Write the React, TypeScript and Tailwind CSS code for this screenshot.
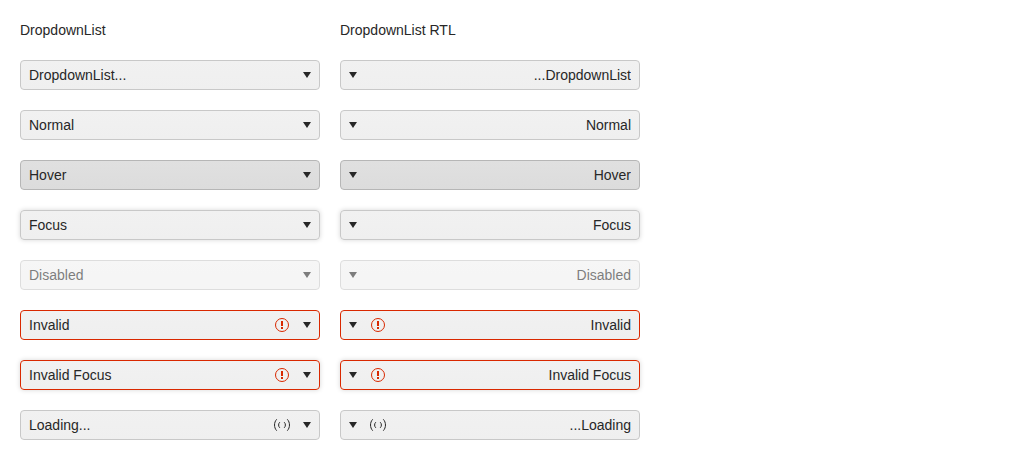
import clsx from "clsx";

type Status = "normal" | "hover" | "focus" | "disabled" | "invalid" | "invalidFocus" | "loading";

type Row = { id: string; text: string; status: Status };

const rows: Row[] = [
  { id: "default", text: "DropdownList...", status: "normal" },
  { id: "normal", text: "Normal", status: "normal" },
  { id: "hover", text: "Hover", status: "hover" },
  { id: "focus", text: "Focus", status: "focus" },
  { id: "disabled", text: "Disabled", status: "disabled" },
  { id: "invalid", text: "Invalid", status: "invalid" },
  { id: "invalid-focus", text: "Invalid Focus", status: "invalidFocus" },
  { id: "loading", text: "Loading...", status: "loading" },
];

const surface = "bg-linear-to-b from-[#f1f1f1] to-[#efefef]";
const rest = clsx(surface, "border-[#c8c8c8]");
const error = clsx(surface, "border-[#d92800]");
const focusRing = "shadow-[0_0_5px_0_rgba(0,0,0,0.16)]";

const looks: Record<Status, string> = {
  normal: rest,
  loading: rest,
  hover: "border-[#b6b6b6] bg-linear-to-b from-[#e0e0e0] to-[#dcdcdc]",
  focus: clsx(rest, focusRing),
  disabled: rest,
  invalid: error,
  invalidFocus: clsx(error, focusRing),
};

function CaretIcon() {
  return (
    <svg viewBox="0 0 16 16" className="size-4" fill="currentColor" aria-hidden="true">
      <path d="M8 11 4 5h8z" />
    </svg>
  );
}

function InvalidIcon() {
  return (
    <svg viewBox="0 0 16 16" className="size-4 text-[#d92800]" fill="none" aria-hidden="true">
      <circle cx="8" cy="8" r="6.5" stroke="currentColor" />
      <path d="M7 4h2v5H7zM7 10h2v2H7z" fill="currentColor" />
    </svg>
  );
}

function LoadingIcon() {
  return (
    <svg viewBox="0 0 16 16" className="size-4" fill="none" stroke="currentColor" aria-hidden="true">
      <path d="M2.7 2.3C-.2 5.4-.2 10.6 2.7 13.7M13.3 2.3C16.2 5.4 16.2 10.6 13.3 13.7" />
      <path d="M5.8 5.2C4.2 6.7 4.2 9.3 5.8 10.8M10.2 5.2C11.8 6.7 11.8 9.3 10.2 10.8" />
    </svg>
  );
}

function DropdownList({ row, dir }: { row: Row; dir: "ltr" | "rtl" }) {
  const invalid = row.status === "invalid" || row.status === "invalidFocus";
  return (
    <div
      dir={dir}
      className={clsx("grid items-center", row.status === "disabled" && "opacity-60")}
    >
      <select
        id={`${dir}-${row.id}`}
        aria-label={row.text}
        aria-invalid={invalid}
        aria-busy={row.status === "loading"}
        disabled={row.status === "disabled"}
        className={clsx(
          "col-start-1 row-start-1 w-full appearance-none rounded border px-2 py-1 text-sm leading-5 text-[#272727] outline-none",
          looks[row.status],
        )}
      >
        <option>{row.text}</option>
      </select>
      <span className="pointer-events-none col-start-1 row-start-1 flex items-center gap-[9px] justify-self-end pe-[5px]">
        {invalid && <InvalidIcon />}
        {row.status === "loading" && <LoadingIcon />}
        <CaretIcon />
      </span>
    </div>
  );
}

function Column({ title, dir }: { title: string; dir: "ltr" | "rtl" }) {
  return (
    <section className="flex flex-col gap-5">
      <h2 className="text-sm leading-5">{title}</h2>
      {rows.map((row) => (
        <DropdownList key={row.id} row={row} dir={dir} />
      ))}
    </section>
  );
}

export default function App() {
  return (
    <main className="bg-white p-5 font-['Liberation_Sans',Arial,sans-serif] text-[#272727]">
      <div className="grid max-w-[620px] grid-cols-2 gap-5">
        <Column title="DropdownList" dir="ltr" />
        <Column title="DropdownList RTL" dir="rtl" />
      </div>
    </main>
  );
}
